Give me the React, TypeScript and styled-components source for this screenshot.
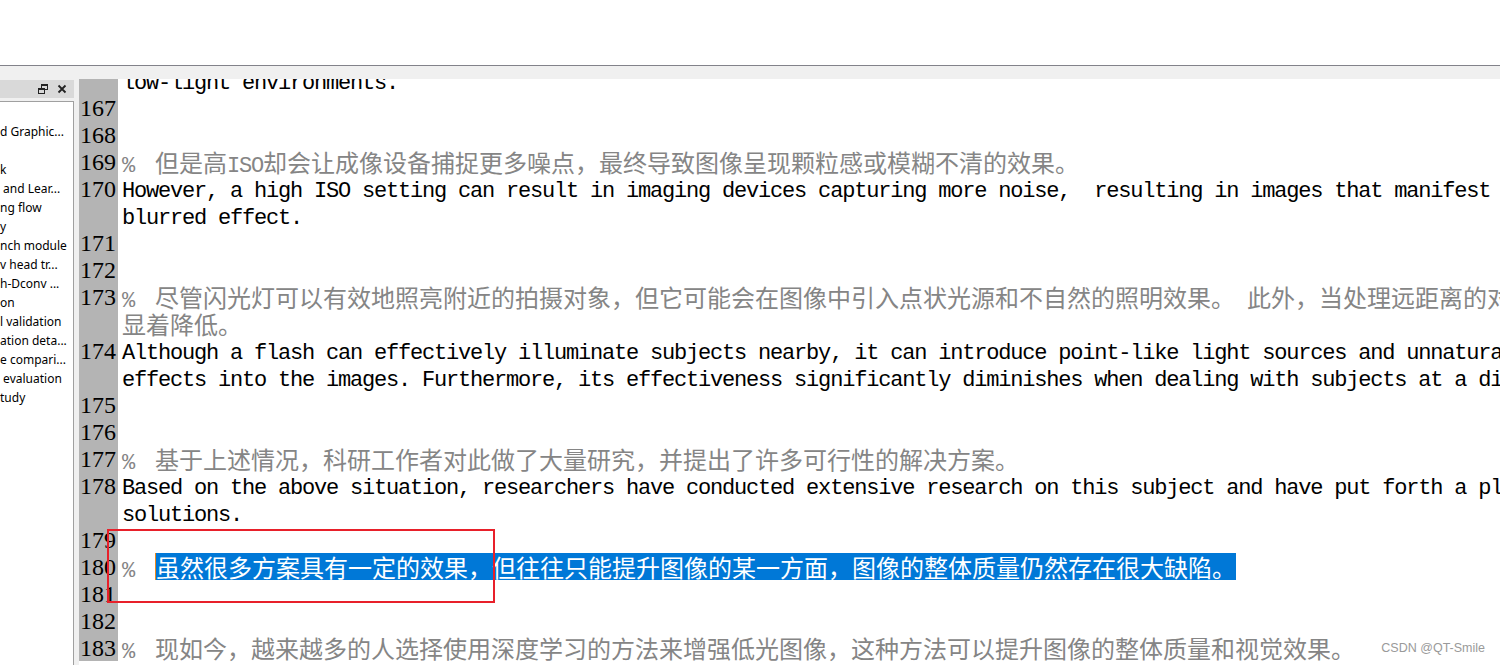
import React from "react";
import styled, { createGlobalStyle } from "styled-components";

const GlobalStyle = createGlobalStyle`
  html, body {
    margin: 0;
    padding: 0;
    background: #ffffff;
  }
  body {
    width: 1500px;
    height: 665px;
    overflow: hidden;
  }
`;

const Page = styled.div`
  position: relative;
  width: 1500px;
  height: 665px;
  display: flex;
  flex-direction: column;
  overflow: hidden;
  background: #ffffff;
`;

const TopArea = styled.div`
  flex: none;
  height: 65px;
  background: #ffffff;
`;

const Workspace = styled.div`
  flex: 1;
  min-height: 0;
  display: flex;
  gap: 5px;
  padding-top: 13px;
  background: #f0f0f0;
  border-top: 1px solid #82828a;
`;

const Panel = styled.div`
  flex: none;
  width: 74px;
  display: flex;
  flex-direction: column;
  padding-top: 1px;
`;

const PanelHeader = styled.div`
  flex: none;
  height: 18px;
  background: #d9d9d9;
  display: flex;
  align-items: center;
  justify-content: flex-end;
  gap: 9px;
  padding-right: 7px;
`;

const HeaderIcon = styled.svg`
  display: block;
  width: 10px;
  height: 10px;
`;

const PanelBody = styled.div`
  flex: 1;
  margin-top: 3px;
  background: #ffffff;
  border-top: 1px solid #a0a0a0;
  border-right: 1px solid #a0a0a0;
  padding-top: 1px;
  overflow: hidden;
`;

const TreeItem = styled.div`
  height: 19px;
  line-height: 19px;
  font-family: "Noto Sans", "Open Sans", sans-serif;
  font-size: 12px;
  color: #000000;
  white-space: pre;
  overflow: hidden;
`;

const Editor = styled.div`
  flex: 1;
  min-width: 0;
  background: #ffffff;
  overflow: hidden;
`;

const Lines = styled.div`
  margin-top: -12px;
`;

const Row = styled.div`
  display: flex;
  height: 27px;
`;

const LineNo = styled.div`
  flex: none;
  box-sizing: border-box;
  width: 39px;
  padding-right: 2px;
  background: #b4b4b4;
  text-align: right;
  font-family: "Liberation Serif", serif;
  font-size: 24px;
  line-height: 28px;
  color: #000000;
`;

const Code = styled.div<{ $comment?: boolean }>`
  flex: none;
  padding-left: 4px;
  height: 27px;
  white-space: pre;
  font-family: "Liberation Mono", monospace;
  font-size: 22px;
  letter-spacing: -1.2px;
  line-height: 33px;
  color: ${(p) => (p.$comment ? "#858585" : "#000000")};
`;

const Cjk = styled.span`
  font-family: "Noto Sans CJK SC", sans-serif;
  font-size: 24px;
  letter-spacing: 0;
  line-height: 27px;
`;

const Percent = styled.span`
  display: inline-block;
  width: 33px;
`;

const Selection = styled.span`
  display: inline-block;
  height: 27px;
  line-height: 27px;
  vertical-align: baseline;
  background: #0078d7;
  color: #ffffff;
  border-left: 1px solid #f08a1c;
`;

const RedBox = styled.div`
  position: absolute;
  left: 107px;
  top: 529px;
  width: 388px;
  height: 74px;
  box-sizing: border-box;
  border: 2px solid #e8202a;
  pointer-events: none;
`;

const Watermark = styled.div`
  position: absolute;
  right: 15px;
  top: 640px;
  font-family: "Liberation Sans", Arial, sans-serif;
  font-size: 12.5px;
  line-height: 16px;
  color: #9a9a9a;
`;

const CJK_RE = /([\u3000-\u303f\u4e00-\u9fff\uff00-\uffef]+)/;

function Mixed({ text }: { text: string }) {
  const parts = text.split(CJK_RE).filter((s) => s.length > 0);
  return (
    <>
      {parts.map((p, i) =>
        CJK_RE.test(p) ? <Cjk key={i}>{p}</Cjk> : <React.Fragment key={i}>{p}</React.Fragment>
      )}
    </>
  );
}

type Line = {
  no?: number;
  text?: string;
  comment?: boolean;
  continuation?: boolean;
  selected?: boolean;
};

const lines: Line[] = [
  { text: "low-light environments.", continuation: true },
  { no: 167 },
  { no: 168 },
  { no: 169, comment: true, text: "但是高ISO却会让成像设备捕捉更多噪点，最终导致图像呈现颗粒感或模糊不清的效果。" },
  {
    no: 170,
    text: "However, a high ISO setting can result in imaging devices capturing more noise,  resulting in images that manifest a grainy or",
  },
  { text: "blurred effect.", continuation: true },
  { no: 171 },
  { no: 172 },
  {
    no: 173,
    comment: true,
    text: "尽管闪光灯可以有效地照亮附近的拍摄对象，但它可能会在图像中引入点状光源和不自然的照明效果。 此外，当处理远距离的对象时，其有效性",
  },
  { comment: true, continuation: true, text: "显着降低。" },
  {
    no: 174,
    text: "Although a flash can effectively illuminate subjects nearby, it can introduce point-like light sources and unnatural lighting",
  },
  {
    continuation: true,
    text: "effects into the images. Furthermore, its effectiveness significantly diminishes when dealing with subjects at a distance.",
  },
  { no: 175 },
  { no: 176 },
  { no: 177, comment: true, text: "基于上述情况，科研工作者对此做了大量研究，并提出了许多可行性的解决方案。" },
  {
    no: 178,
    text: "Based on the above situation, researchers have conducted extensive research on this subject and have put forth a plethora of",
  },
  { text: "solutions.", continuation: true },
  { no: 179 },
  {
    no: 180,
    comment: true,
    selected: true,
    text: "虽然很多方案具有一定的效果，但往往只能提升图像的某一方面，图像的整体质量仍然存在很大缺陷。",
  },
  { no: 181 },
  { no: 182 },
  {
    no: 183,
    comment: true,
    text: "现如今，越来越多的人选择使用深度学习的方法来增强低光图像，这种方法可以提升图像的整体质量和视觉效果。",
  },
];

const treeItems = [
  "",
  "d Graphic...",
  "",
  "k",
  " and Lear...",
  "ng flow",
  "y",
  "nch module",
  "v head tr...",
  "h-Dconv ...",
  "on",
  "l validation",
  "ation deta...",
  "e compari...",
  " evaluation",
  "tudy",
];

function CodeLine({ line }: { line: Line }) {
  return (
    <Row>
      <LineNo>{line.no ?? ""}</LineNo>
      <Code $comment={line.comment}>
        {line.comment && !line.continuation && <Percent>%</Percent>}
        {line.text &&
          (line.selected ? (
            <Selection>
              <Mixed text={line.text} />
            </Selection>
          ) : (
            <Mixed text={line.text} />
          ))}
      </Code>
    </Row>
  );
}

export default function App() {
  return (
    <Page>
      <GlobalStyle />
      <TopArea />
      <Workspace>
        <Panel>
          <PanelHeader>
            <HeaderIcon viewBox="0 0 10 10">
              <rect x="3.5" y="0.5" width="6" height="5" fill="none" stroke="#222" strokeWidth="1" />
              <rect x="3.5" y="0.5" width="6" height="1.5" fill="#222" />
              <rect x="0.5" y="4.5" width="6" height="5" fill="#d9d9d9" stroke="#222" strokeWidth="1" />
              <rect x="0.5" y="4.5" width="6" height="1.5" fill="#222" />
            </HeaderIcon>
            <HeaderIcon viewBox="0 0 10 10">
              <path d="M1.5 1.5 L8.5 8.5 M8.5 1.5 L1.5 8.5" stroke="#222" strokeWidth="1.8" />
            </HeaderIcon>
          </PanelHeader>
          <PanelBody>
            {treeItems.map((t, i) => (
              <TreeItem key={i}>{t}</TreeItem>
            ))}
          </PanelBody>
        </Panel>
        <Editor>
          <Lines>
            {lines.map((l, i) => (
              <CodeLine key={i} line={l} />
            ))}
          </Lines>
        </Editor>
      </Workspace>
      <RedBox />
      <Watermark>CSDN @QT-Smile</Watermark>
    </Page>
  );
}
